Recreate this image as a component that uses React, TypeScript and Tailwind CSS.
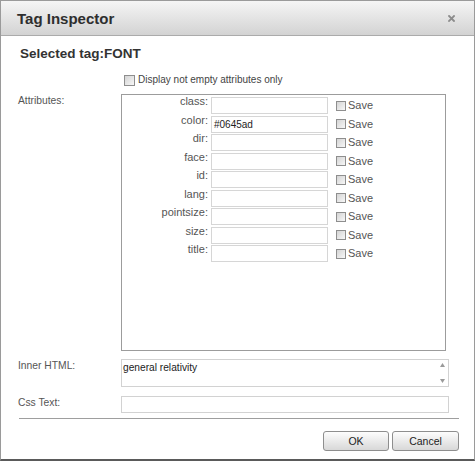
import React from "react";

const font = { fontFamily: '"Liberation Sans", Arial, sans-serif' };

function Check({ className = "" }: { className?: string }) {
  return (
    <span
      className={
        "inline-block w-[10px] h-[10px] border border-[#8e8e8e] bg-gradient-to-br from-[#d4d4d4] to-[#f7f7f7] shrink-0 " +
        className
      }
    />
  );
}

const attrs: [string, string][] = [
  ["class:", ""],
  ["color:", "#0645ad"],
  ["dir:", ""],
  ["face:", ""],
  ["id:", ""],
  ["lang:", ""],
  ["pointsize:", ""],
  ["size:", ""],
  ["title:", ""],
];

export default function App() {
  return (
    <div
      style={font}
      className="w-[475px] h-[461px] bg-white border border-[#9a9a9a] border-b-2 border-b-[#5a5a5a] flex flex-col overflow-hidden"
    >
      {/* Title bar */}
      <div className="h-[35px] shrink-0 bg-gradient-to-b from-[#f5f5f5] to-[#d3d3d3] border-b border-[#ababab] flex items-center justify-between pl-[16px] pr-[19px]">
        <span className="text-[15px] font-bold text-[#2e2e2e] leading-none">Tag Inspector</span>
        <svg width="7" height="7" viewBox="0 0 7 7" className="mt-[1px]">
          <path d="M1 1L6 6M6 1L1 6" stroke="#8c8c8c" strokeWidth="1.8" strokeLinecap="square" />
        </svg>
      </div>

      <div className="flex flex-col pl-[17px] pr-[15px]">
        <div className="mt-[10px] ml-[2px] text-[13.5px] font-bold text-[#333] leading-[16px]">
          Selected tag:FONT
        </div>

        <div className="mt-[11px] h-[14px] flex items-center pl-[106px]">
          <Check className="w-[11px] h-[11px]" />
          <span className="ml-[3px] text-[10px] text-[#444] leading-[14px]">
            Display not empty attributes only
          </span>
        </div>

        {/* Attributes */}
        <div className="mt-[7px] flex">
          <div className="w-[103px] shrink-0 text-[10.3px] text-[#555] leading-[12px] pt-[1px]">Attributes:</div>
          <div className="w-[325px] h-[257px] border border-[#9c9c9c] flex flex-col">
            {attrs.map(([label, value]) => (
              <div key={label} className="h-[18.5px] flex items-start shrink-0">
                <div className="w-[86px] text-right text-[11px] leading-[13px] text-[#555]">{label}</div>
                <div className="ml-[3px] mt-[2px] w-[117px] h-[17px] border border-[#d6d6d6] text-[10px] text-[#222] leading-[15px] pl-[2px]">
                  {value}
                </div>
                <div className="ml-[8px] mt-[2px] h-[17px] flex items-center">
                  <Check />
                  <span className="ml-[2px] text-[11px] text-[#555] leading-[13px]">Save</span>
                </div>
              </div>
            ))}
          </div>
        </div>

        {/* Inner HTML */}
        <div className="mt-[8px] flex">
          <div className="w-[103px] shrink-0 text-[10.3px] text-[#555] leading-[12px] pt-[1px]">Inner HTML:</div>
          <div className="w-[328px] h-[28px] border border-[#d2d2d2] flex">
            <div className="flex-1 text-[10.2px] text-[#222] leading-[12px] pl-[1px] pt-[2px]">general relativity</div>
            <div className="w-[12px] flex flex-col items-center justify-between py-[3px]">
              <svg width="5" height="4" viewBox="0 0 5 4">
                <path d="M2.5 0L5 4H0Z" fill="#9a9a9a" />
              </svg>
              <svg width="5" height="4" viewBox="0 0 5 4">
                <path d="M0 0H5L2.5 4Z" fill="#9a9a9a" />
              </svg>
            </div>
          </div>
        </div>

        {/* Css Text */}
        <div className="mt-[9px] flex">
          <div className="w-[103px] shrink-0 text-[10.3px] text-[#555] leading-[12px] pt-[1px]">Css Text:</div>
          <div className="w-[328px] h-[17px] border border-[#d2d2d2]" />
        </div>

        <div className="mt-[5px] ml-[1px] h-px bg-[#9e9e9e]" />

        <div className="mt-[12px] flex justify-end gap-[3px]">
          <button className="w-[66px] h-[20px] border border-[#8e8e8e] rounded-[3px] bg-gradient-to-b from-[#fdfdfd] to-[#d8d8d8] text-[10.5px] text-[#222] leading-none">
            OK
          </button>
          <button className="w-[67px] h-[20px] border border-[#8e8e8e] rounded-[3px] bg-gradient-to-b from-[#fdfdfd] to-[#d8d8d8] text-[10.5px] text-[#222] leading-none">
            Cancel
          </button>
        </div>
      </div>
    </div>
  );
}
